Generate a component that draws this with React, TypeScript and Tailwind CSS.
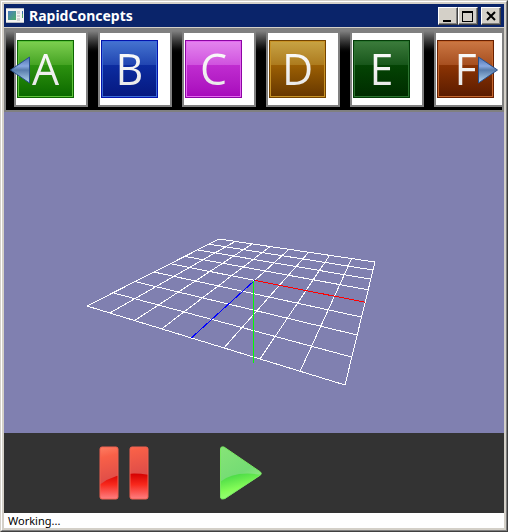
const tiles = [
  { letter: "A", style: "border-[#0c6400] outline-[#5fc43c] from-[#7ed050] via-[#3a9c18] to-[#0c7000]", lower: "from-[#2c9210] to-[#0a6a00]" },
  { letter: "B", style: "border-[#0414ac] outline-[#3c6cd8] from-[#4674d0] via-[#1c3cac] to-[#061a80]", lower: "from-[#0c2ca0] to-[#061880]" },
  { letter: "C", style: "border-[#8c04a4] outline-[#e466f0] from-[#e484ee] via-[#cc48dc] to-[#a808bc]", lower: "from-[#c02cd0] to-[#a808bc]" },
  { letter: "D", style: "border-[#744400] outline-[#c89428] from-[#c8a444] via-[#a87414] to-[#683800]", lower: "from-[#9c6004] to-[#683800]" },
  { letter: "E", style: "border-[#043c08] outline-[#2c7430] from-[#3c7c3c] via-[#105014] to-[#002c00]", lower: "from-[#044404] to-[#002c00]" },
  { letter: "F", style: "border-[#682000] outline-[#c46830] from-[#cc7844] via-[#a04818] to-[#5c1c00]", lower: "from-[#8c3404] to-[#5c1c00]" },
];

type Point = [number, number];

const corners: Record<"left" | "front" | "right" | "back", Point> = {
  left: [87, 306],
  front: [345, 385],
  right: [375, 262],
  back: [219, 239],
};

// Maps the unit square onto the four ground corners in perspective
function project(u: number, v: number): Point {
  const [x0, y0] = corners.left;
  const [x1, y1] = corners.front;
  const [x2, y2] = corners.right;
  const [x3, y3] = corners.back;
  const dx1 = x1 - x2;
  const dx2 = x3 - x2;
  const sx = x0 - x1 + x2 - x3;
  const dy1 = y1 - y2;
  const dy2 = y3 - y2;
  const sy = y0 - y1 + y2 - y3;
  const det = dx1 * dy2 - dx2 * dy1;
  const g = (sx * dy2 - dx2 * sy) / det;
  const h = (dx1 * sy - sx * dy1) / det;
  const w = g * u + h * v + 1;
  return [
    ((x1 - x0 + g * x1) * u + (x3 - x0 + h * x3) * v + x0) / w,
    ((y1 - y0 + g * y1) * u + (y3 - y0 + h * y3) * v + y0) / w,
  ];
}

const Line = ({ from, to, color = "#fff" }: { from: Point; to: Point; color?: string }) => (
  <line x1={from[0]} y1={from[1]} x2={to[0]} y2={to[1]} stroke={color} />
);

const AppIcon = () => (
  <svg width="18" height="16" viewBox="0 0 18 16" aria-hidden="true">
    <defs>
      <linearGradient id="pane" x2="1" y2="1">
        <stop stopColor="#4a7cc0" />
        <stop offset="1" stopColor="#4cae68" />
      </linearGradient>
    </defs>
    <path d="M0 0h18v15H0z" fill="#f4f4f2" />
    <path d="M0 0h18v1H0zM0 14h18v1H0z" fill="#b8bcc4" />
    <path d="M2 3h8v9H2z" fill="url(#pane)" />
    <path d="M11 3h3v3h-3zM11 7h3v2h-3zM11 10h3v3h-3z" fill="#d4d4d4" />
    <path d="M16 3h1v3h-1z" fill="#3c6cac" />
    <path d="M16 6h1v4h-1z" fill="#54a868" />
  </svg>
);

const WindowButton = ({ label, children }: { label: string; children: React.ReactNode }) => (
  <button
    aria-label={label}
    className="h-[18px] w-5 border border-t-white border-l-white border-r-[#404040] border-b-[#404040] bg-[#d4d0c8] shadow-[inset_-1px_-1px_0_#808080]"
  >
    <svg width="18" height="16" viewBox="0 0 18 16" shapeRendering="crispEdges" fill="none" stroke="#000">
      {children}
    </svg>
  </button>
);

const TitleBar = () => (
  <header className="flex h-6 shrink-0 items-center border-b border-[#d4d0c8] bg-[#0a246a] pr-[3px] pl-[2px]">
    <AppIcon />
    <h1 className="ml-[5px] flex-1 font-['Noto_Sans','Open_Sans',sans-serif] text-sm leading-5 font-bold text-white">
      RapidConcepts
    </h1>
    <div className="flex">
      <WindowButton label="Minimize">
        <path d="M4 13h8" strokeWidth="2" />
      </WindowButton>
      <WindowButton label="Maximize">
        <path d="M3 4h11" strokeWidth="2" />
        <path d="M3.5 4v9.5h10V4" />
      </WindowButton>
    </div>
    <div className="ml-[3px] flex">
      <WindowButton label="Close">
        <path d="M5 4l8 8M13 4l-8 8" strokeWidth="2" shapeRendering="auto" />
      </WindowButton>
    </div>
  </header>
);

const Arrow = ({ flip }: { flip?: boolean }) => (
  <svg width="20" height="28" viewBox="0 0 20 28" className={flip ? "-scale-x-100" : ""} aria-hidden="true">
    <defs>
      <linearGradient id="steel" x2="0" y2="1">
        <stop stopColor="#4c70b0" />
        <stop offset=".35" stopColor="#88a8e0" />
        <stop offset=".5" stopColor="#587cac" />
        <stop offset="1" stopColor="#b4d8f4" />
      </linearGradient>
    </defs>
    <path d="M.5 1 19.500 14 .5 27z" fill="url(#steel)" stroke="#28508c" strokeLinejoin="round" />
  </svg>
);

const TileStrip = () => (
  <nav
    aria-label="Concepts"
    className="relative h-[84px] shrink-0 overflow-hidden border-2 border-t-[3px] border-[#808080] bg-linear-to-b from-[#808080] to-black to-30%"
  >
    <div className="-mr-[2px] flex gap-[10px] overflow-hidden pl-2">
      {tiles.map((tile) => (
        <button
          key={tile.letter}
          className="h-[76px] w-[74px] shrink-0 border-2 border-[#808080] bg-white pl-px text-left"
        >
          <span
            className={`relative flex h-[58px] w-[57px] items-center justify-center overflow-hidden border bg-linear-to-b outline -outline-offset-2 ${tile.style}`}
          >
            <span className={`absolute inset-x-px top-6 bottom-px bg-linear-to-b ${tile.lower}`} />
            <span className="relative bg-linear-to-b from-white to-[#e4e4e4] bg-clip-text font-['Open_Sans','Noto_Sans',sans-serif] text-[43px] leading-[54px] text-transparent">
              {tile.letter}
            </span>
          </span>
        </button>
      ))}
    </div>
    <button aria-label="Previous" className="absolute top-[25px] left-1">
      <Arrow flip />
    </button>
    <button aria-label="Next" className="absolute top-[25px] right-1">
      <Arrow />
    </button>
  </nav>
);

const Viewport = () => {
  const steps = Array.from({ length: 9 }, (_, i) => i / 8);
  const origin = project(0.5, 0.5);

  return (
    <main className="min-h-0 flex-1 bg-[#8080b0]">
      <svg viewBox="4 112 500 321" className="block h-full w-full" shapeRendering="crispEdges">
        {steps.map((s) => (
          <g key={s}>
            <Line from={project(s, 0)} to={project(s, 1)} />
            <Line from={project(0, s)} to={project(1, s)} />
          </g>
        ))}
        <Line from={origin} to={project(0.5, 0)} color="#0000ff" />
        <Line from={origin} to={project(1, 0.5)} color="#ff0000" />
        <Line from={[253.5, 281]} to={[253.5, 363]} color="#00ff00" />
      </svg>
    </main>
  );
};

const PauseIcon = () => (
  <svg width="52" height="56" viewBox="0 0 52 56" aria-hidden="true">
    <defs>
      <linearGradient id="redTop" x2=".3" y2="1">
        <stop stopColor="#ff8468" />
        <stop offset=".3" stopColor="#f86048" />
        <stop offset="1" stopColor="#d84848" />
      </linearGradient>
      <linearGradient id="redBottom" x2="0" y2="1">
        <stop stopColor="#d40000" />
        <stop offset=".4" stopColor="#f8281c" />
        <stop offset="1" stopColor="#ff8c90" />
      </linearGradient>
      <clipPath id="bars">
        <rect x="2" y="2" width="18" height="52" rx="2" />
        <rect x="32" y="2" width="18" height="52" rx="2" />
      </clipPath>
    </defs>
    <g clipPath="url(#bars)">
      <path d="M0 0h26v42H0zM26 0h26v42H26z" fill="url(#redTop)" />
      <path d="M0 41Q20 24 52 30V56H0z" fill="url(#redBottom)" />
    </g>
    <g fill="none" stroke="#f06050">
      <rect x="2" y="2" width="18" height="52" rx="2" />
      <rect x="32" y="2" width="18" height="52" rx="2" />
    </g>
  </svg>
);

const PlayIcon = () => (
  <svg width="44" height="56" viewBox="0 0 44 56" aria-hidden="true">
    <defs>
      <linearGradient id="greenTop" x2=".5" y2="1">
        <stop stopColor="#88e478" />
        <stop offset=".6" stopColor="#74dc74" />
        <stop offset="1" stopColor="#a4f08c" />
      </linearGradient>
      <linearGradient id="greenBottom" x2=".4" y2="1">
        <stop stopColor="#38d040" />
        <stop offset=".6" stopColor="#84fc58" />
        <stop offset="1" stopColor="#a0ff88" />
      </linearGradient>
      <clipPath id="triangle">
        <path d="M1.5 4Q1.500 1 5 2L41.500 27Q43 28.500 41.500 30L6 53.500Q1.500 55 1.500 52z" />
      </clipPath>
    </defs>
    <g clipPath="url(#triangle)">
      <path d="M0 0h44v56H0z" fill="url(#greenTop)" />
      <path d="M0 38Q14 25 44 30V56H0z" fill="url(#greenBottom)" />
    </g>
    <path d="M1.500 4Q1.500 1 5 2L41.500 27Q43 28.500 41.500 30L6 53.500Q1.500 55 1.500 52z" fill="none" stroke="#78e860" />
  </svg>
);

const App = () => {
  return (
    <div className="h-screen border border-t-[#d4d0c8] border-l-[#d4d0c8] border-r-[#404040] border-b-[#404040] bg-[#d4d0c8]">
      <div className="flex h-full flex-col border border-t-white border-l-white border-r-[#808080] border-b-[#808080] p-[2px]">
        <TitleBar />
        <TileStrip />
        <Viewport />
        <div className="flex h-20 shrink-0 items-center gap-[69px] bg-[#333333] pl-[94px]">
          <button aria-label="Pause">
            <PauseIcon />
          </button>
          <button aria-label="Play">
            <PlayIcon />
          </button>
        </div>
        <footer className="h-[15px] shrink-0 bg-white pl-1 font-['Noto_Sans','Open_Sans',sans-serif] text-[11px] leading-[15px] text-black">
          Working...
        </footer>
      </div>
    </div>
  );
};

export default App;
